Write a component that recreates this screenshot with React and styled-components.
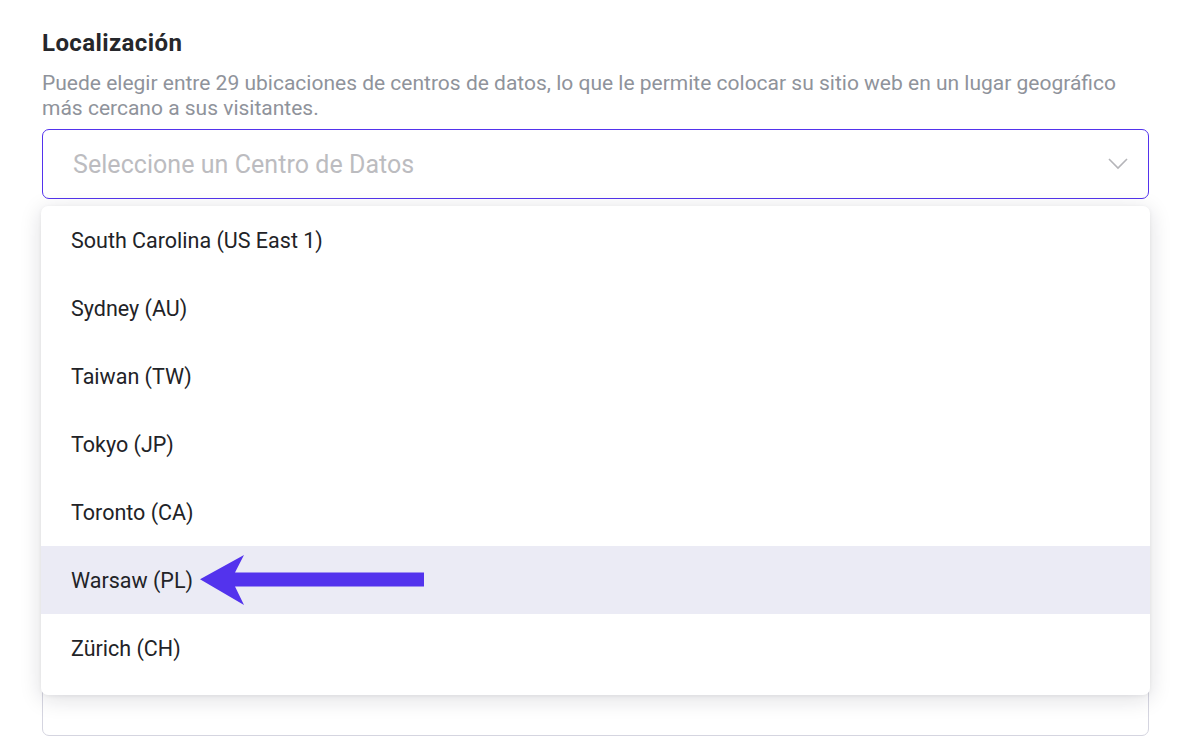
import React from 'react';
import styled, { createGlobalStyle } from 'styled-components';

const GlobalStyle = createGlobalStyle`
  body {
    margin: 0;
    background: #fff;
    font-family: Roboto, 'Liberation Sans', sans-serif;
  }
`;

const Page = styled.div`
  padding: 28px 41px 0 42px;
  width: 1190px;
  height: 740px;
  box-sizing: border-box;
  overflow: hidden;
`;

const Title = styled.h2`
  margin: 0;
  font-size: 24px;
  line-height: 30px;
  font-weight: 700;
  letter-spacing: 0.4px;
  color: #26272b;
`;

const Help = styled.p`
  margin: 13px 0 0;
  font-size: 21px;
  line-height: 25px;
  color: #8f939b;
  max-width: 1100px;
`;

const Field = styled.div`
  position: relative;
  margin-top: 8px;
`;

const SelectBox = styled.div`
  height: 70px;
  box-sizing: border-box;
  border: 1px solid ${(p) => (p.$active ? '#5333ed' : '#d5d5e0')};
  border-radius: 7px;
  display: flex;
  align-items: center;
  justify-content: space-between;
  padding: 0 20px 0 30px;
  margin-bottom: ${(p) => p.$gap || 0}px;
`;

const Placeholder = styled.span`
  font-size: 25px;
  letter-spacing: 0.05px;
  color: #bcbcc0;
`;

const Menu = styled.ul`
  position: absolute;
  top: 77px;
  left: -1px;
  right: -1px;
  margin: 0;
  padding: 0 0 13px;
  list-style: none;
  background: #fff;
  border-radius: 7px;
  box-shadow: 0 4px 22px rgba(20, 20, 40, 0.14), 0 1px 4px rgba(20, 20, 40, 0.06);
  z-index: 2;
`;

const Item = styled.li`
  position: relative;
  height: 68px;
  display: flex;
  align-items: center;
  padding-left: 30px;
  font-size: 21.5px;
  color: #222327;
  background: ${(p) => (p.$hover ? '#ebebf5' : 'transparent')};
`;

const Pointer = styled.svg`
  position: absolute;
  left: 159px;
  top: 9px;
`;

const items = [
  'South Carolina (US East 1)',
  'Sydney (AU)',
  'Taiwan (TW)',
  'Tokyo (JP)',
  'Toronto (CA)',
  'Warsaw (PL)',
  'Zürich (CH)',
];

function Chevron() {
  return (
    <svg width="20" height="12" viewBox="0 0 20 12" fill="none">
      <path d="M1 1l9 9 9-9" stroke="#b5b5b9" strokeWidth="1.6" />
    </svg>
  );
}

export default function App() {
  return (
    <Page>
      <GlobalStyle />
      <Title>Localización</Title>
      <Help>
        Puede elegir entre 29 ubicaciones de centros de datos, lo que le permite colocar su sitio web en un lugar geográfico
        más cercano a sus visitantes.
      </Help>
      <Field>
        <SelectBox $active $gap={467}>
          <Placeholder>Seleccione un Centro de Datos</Placeholder>
          <Chevron />
        </SelectBox>
        <SelectBox />
        <Menu>
          {items.map((name) => (
            <Item key={name} $hover={name === 'Warsaw (PL)'}>
              {name}
              {name === 'Warsaw (PL)' && (
                <Pointer width="225" height="50" viewBox="0 0 225 50">
                  <path d="M0 24.3 L44 0 L35 17.5 L224 17.5 L224 31.5 L35 31.5 L44 50 Z" fill="#5333ed" />
                </Pointer>
              )}
            </Item>
          ))}
        </Menu>
      </Field>
    </Page>
  );
}
